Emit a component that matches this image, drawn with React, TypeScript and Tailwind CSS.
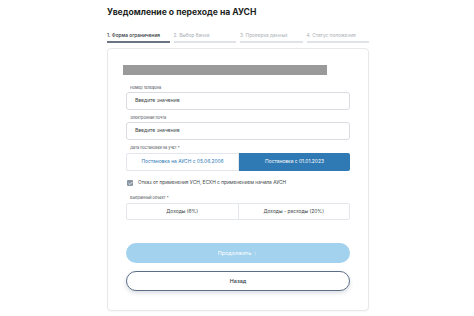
import { Check, ChevronRight } from "lucide-react";

const tabs = ["1. Форма ограничения", "2. Выбор банка", "3. Проверка данных", "4. Статус положения"];

export default function App() {
  return (
    <div className="min-h-[316px] bg-white font-['Inter',sans-serif]">
      <div className="ml-[107px] w-[262px] pt-[7px]">
        <h1 className="text-[8.6px] font-bold leading-[11px] text-[#1d1f24]">
          Уведомление о переходе на АУСН
        </h1>

        {/* шаги */}
        <div className="mt-[14px] flex gap-[4px]">
          {tabs.map((t, i) => (
            <div key={t} className="flex-1">
              <div
                className={
                  i === 0
                    ? "text-[4.8px] font-medium leading-[6px] text-[#2b2f36]"
                    : "text-[4.8px] leading-[6px] text-[#a8adb4]"
                }
              >
                {t}
              </div>
              <div className={i === 0 ? "mt-[3px] h-[2px] bg-[#6b7480]" : "mt-[3px] h-[2px] bg-[#dfe2e6]"} />
            </div>
          ))}
        </div>

        {/* карточка */}
        <div className="mt-[5px] rounded-[4px] border border-[#e6e8eb] bg-white px-[18px] pb-[19px] pt-[16px] shadow-[0_1px_2px_rgba(0,0,0,0.04)]">
          <div className="-ml-[3px] h-[10px] w-[204px] bg-[#9a9a9a]" />

          <div className="mt-[10px] pl-[4px] text-[3.8px] leading-[5px] text-[#4b5058]">Номер телефона</div>
          <div className="mt-[2px] flex h-[18px] items-center rounded-[3px] border border-[#d9dce0] px-[8px] text-[5px] text-[#3a3f46]">
            Введите значение
          </div>

          <div className="mt-[5px] pl-[4px] text-[3.8px] leading-[5px] text-[#4b5058]">Электронная почта</div>
          <div className="mt-[2px] flex h-[18px] items-center rounded-[3px] border border-[#d9dce0] px-[8px] text-[5px] text-[#3a3f46]">
            Введите значение
          </div>

          <div className="mt-[5px] pl-[4px] text-[3.8px] leading-[5px] text-[#4b5058]">Дата постановки на учет *</div>
          <div className="mt-[3px] flex h-[18px] text-[4.9px]">
            <div className="flex flex-1 items-center justify-center rounded-l-[2px] border border-[#e3e6ea] text-[#2f7bb5]">
              Постановка на АУСН с 05.06.2006
            </div>
            <div className="flex flex-1 items-center justify-center rounded-r-[2px] bg-[#2f7ab4] text-white">
              Постановка с 01.01.2023
            </div>
          </div>

          <div className="mt-[8px] flex h-[8px] items-center gap-[5px] pl-[1px]">
            <div className="flex h-[6px] w-[6px] items-center justify-center rounded-[1px] bg-[#8b96a3]">
              <Check className="h-[5px] w-[5px] text-white" strokeWidth={4} />
            </div>
            <span className="text-[4.8px] text-[#3a3f46]">Отказ от применения УСН, ЕСХН с применением начала АУСН</span>
          </div>

          <div className="mt-[8px] pl-[4px] text-[3.8px] leading-[5px] text-[#4b5058]">Выбранный объект *</div>
          <div className="mt-[3px] flex h-[17px] rounded-[2px] border border-[#e3e6ea] text-[4.9px] text-[#3a3f46]">
            <div className="flex flex-1 items-center justify-center border-r border-[#e3e6ea]">Доходы (6%)</div>
            <div className="flex flex-1 items-center justify-center">Доходы - расходы (20%)</div>
          </div>

          <button className="mt-[23px] flex h-[20px] w-full items-center justify-center gap-[2px] rounded-full bg-[#a2d2ee] text-[5.4px] text-white">
            Продолжить <ChevronRight className="h-[5px] w-[5px]" strokeWidth={2} />
          </button>
          <button className="mt-[8px] flex h-[20px] w-full items-center justify-center rounded-full border border-[#5d6f86] bg-white text-[5.4px] font-medium text-[#2b3340] shadow-[0_2px_4px_rgba(40,60,90,0.18)]">
            Назад
          </button>
        </div>
      </div>
    </div>
  );
}
